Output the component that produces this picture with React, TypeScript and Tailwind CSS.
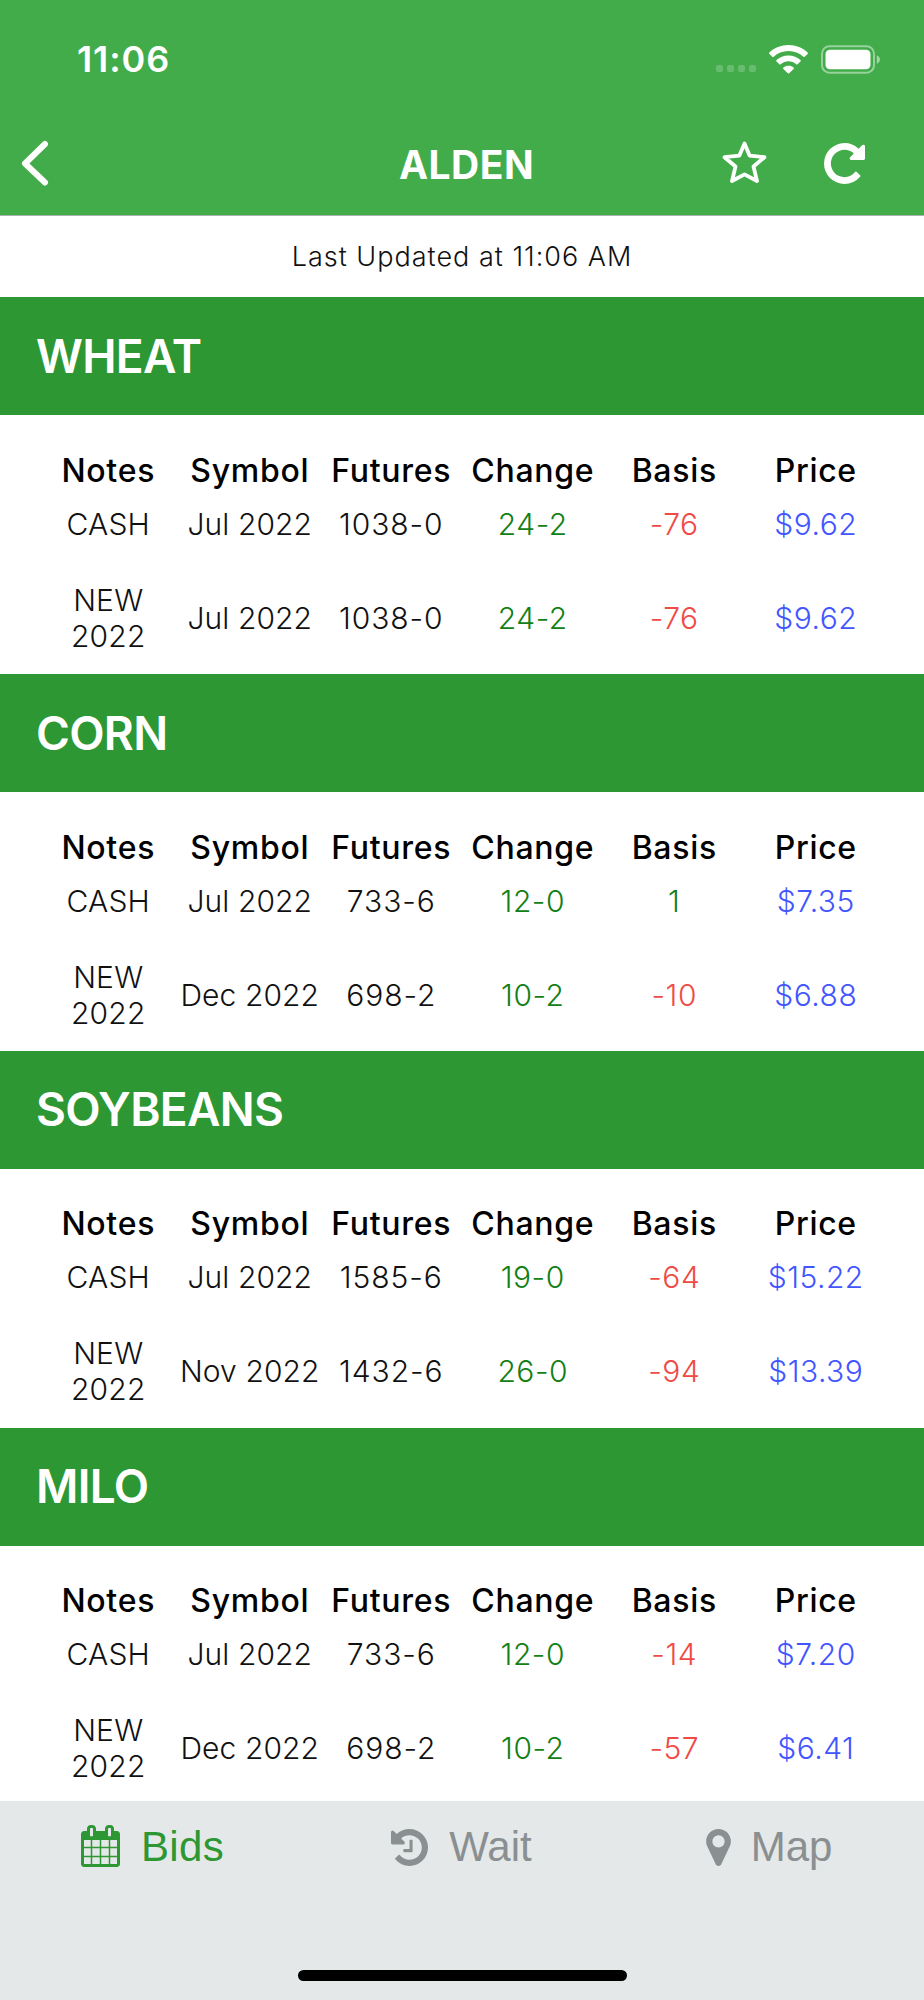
import React from 'react';

interface Bid {
  notes: string;
  symbol: string;
  futures: string;
  change: string;
  basis: string;
  price: string;
}

interface Commodity {
  name: string;
  bids: Bid[];
}

const commodities: Commodity[] = [
  {
    name: 'WHEAT',
    bids: [
      { notes: 'CASH', symbol: 'Jul 2022', futures: '1038-0', change: '24-2', basis: '-76', price: '$9.62' },
      { notes: 'NEW 2022', symbol: 'Jul 2022', futures: '1038-0', change: '24-2', basis: '-76', price: '$9.62' },
    ],
  },
  {
    name: 'CORN',
    bids: [
      { notes: 'CASH', symbol: 'Jul 2022', futures: '733-6', change: '12-0', basis: '1', price: '$7.35' },
      { notes: 'NEW 2022', symbol: 'Dec 2022', futures: '698-2', change: '10-2', basis: '-10', price: '$6.88' },
    ],
  },
  {
    name: 'SOYBEANS',
    bids: [
      { notes: 'CASH', symbol: 'Jul 2022', futures: '1585-6', change: '19-0', basis: '-64', price: '$15.22' },
      { notes: 'NEW 2022', symbol: 'Nov 2022', futures: '1432-6', change: '26-0', basis: '-94', price: '$13.39' },
    ],
  },
  {
    name: 'MILO',
    bids: [
      { notes: 'CASH', symbol: 'Jul 2022', futures: '733-6', change: '12-0', basis: '-14', price: '$7.20' },
      { notes: 'NEW 2022', symbol: 'Dec 2022', futures: '698-2', change: '10-2', basis: '-57', price: '$6.41' },
    ],
  },
];

const columns = ['Notes', 'Symbol', 'Futures', 'Change', 'Basis', 'Price'];

const signColor = (value: string) => (value.startsWith('-') ? 'text-[#ef4a45]' : 'text-[#128015]');

const StatusBar: React.FC = () => (
  <div className="flex h-[112px] items-start justify-between pt-[37px] pl-[77px] pr-[43px]">
    <span className="text-[36px] leading-[44px] font-semibold tracking-[0.900px]">11:06</span>
    <div className="flex h-[44px] items-center">
      <div className="mt-[19px] mr-[13px] flex gap-[4px]">
        {[0, 1, 2, 3].map(dot => (
          <span key={dot} className="size-[7px] rounded-[2px] bg-white/20" />
        ))}
      </div>
      <svg className="mr-[13px] h-[29px] w-[39px]" viewBox="0 0 39 29" fill="currentColor">
        <path d="M19.5 0C27 0 33.700 2.800 38.600 7.500Q39.300 8.200 38.600 8.900L35.700 11.800Q35 12.400 34.300 11.800C30.500 8.200 25.200 6 19.500 6S8.500 8.200 4.700 11.800Q4 12.400 3.300 11.800L.4 8.900Q-.3 8.200 .4 7.500C5.300 2.800 12 0 19.500 0Z" />
        <path d="M19.500 10.400C24.200 10.400 28.400 12.200 31.500 15Q32.200 15.700 31.500 16.400L28.600 19.200Q27.900 19.800 27.200 19.200C25.200 17.400 22.500 16.300 19.500 16.300S13.800 17.400 11.800 19.200Q11.100 19.800 10.400 19.200L7.500 16.400Q6.800 15.700 7.500 15C10.600 12.200 14.800 10.400 19.500 10.400Z" />
        <path d="M19.500 20.800C21.500 20.800 23.200 21.400 24.600 22.500Q25.300 23.200 24.600 23.900L20.200 28.200Q19.500 28.900 18.800 28.200L14.400 23.900Q13.700 23.200 14.400 22.500C15.800 21.400 17.500 20.800 19.500 20.800Z" />
      </svg>
      <svg className="h-[29px] w-[60px]" viewBox="0 0 60 29">
        <rect x="1" y="1.200" width="52" height="26.500" rx="7.500" fill="none" stroke="white" strokeOpacity="0.450" strokeWidth="2" />
        <rect x="4.500" y="4.700" width="45" height="19.500" rx="4.500" fill="white" />
        <path d="M55.800 10.200C57.700 11 59 12.600 59 14.500S57.700 18 55.800 18.800Z" fill="white" fillOpacity="0.500" />
      </svg>
    </div>
  </div>
);

const Header: React.FC = () => (
  <header className="h-[216px] shrink-0 border-b border-[#a9b5a9] bg-[#43ac4a] text-white">
    <StatusBar />
    <div className="grid h-[103px] grid-cols-[360px_1fr_360px] items-center">
      <svg className="mb-[1px] ml-[19px] h-[48px] w-[32px]" viewBox="0 0 32 48" fill="none" stroke="currentColor" strokeWidth="6" strokeLinecap="round" strokeLinejoin="round">
        <path d="M26 5L6 24.500L26 43.500" />
      </svg>
      <h1 className="mt-[3px] ml-[9px] text-center text-[39px] font-bold tracking-[0.500px]">ALDEN</h1>
      <div className="mb-[1px] flex items-center justify-end pr-[59px]">
        <svg className="mr-[57px] mb-[3px] h-[44px] w-[45px]" viewBox="0 0 45 44" fill="none" stroke="currentColor" strokeWidth="3.800" strokeLinejoin="round">
          <path d="M22.500 3.500L27.600 15.600L42.500 17.200L31.500 26.500L35 41L22.500 34.400L10 41L13.500 26.500L2.500 17.200L17.400 15.600Z" />
        </svg>
        <svg className="size-[41px]" viewBox="128 128 1536 1536" fill="currentColor">
          <path d="M1664 256v448q0 26-19 45t-45 19h-448q-42 0-59-40-17-39 14-69l138-138q-148-137-349-137-104 0-198.500 40.500t-163.500 109.500-109.500 163.500-40.500 198.500 40.500 198.500 109.500 163.500 163.500 109.500 198.500 40.500q119 0 225-52t179-147q7-10 23-12 14 0 25 9l137 138q9 8 9.500 20.500t-7.500 22.500q-109 132-264 204.500t-327 72.500q-156 0-298-61t-245-164-164-245-61-298 61-298 164-245 245-164 298-61q147 0 284.500 55.500t244.500 156.500l130-129q29-31 70-14 39 17 39 59z" />
        </svg>
      </div>
    </div>
  </header>
);

const BidTable: React.FC<{ commodity: Commodity }> = ({ commodity }) => (
  <section className="h-[376.800px]">
    <h2 className="flex h-[118px] items-center bg-[#2d9733] pl-[36px] text-[46px] font-semibold tracking-[-0.700px] text-white">
      {commodity.name}
    </h2>
    <div className="px-[37.500px] pt-[36.500px] text-center">
      <div className="grid grid-cols-6 text-[32px] leading-[38px] font-[550] tracking-[0.700px] text-black">
        {columns.map(column => (
          <span key={column}>{column}</span>
        ))}
      </div>
      {commodity.bids.map(bid => (
        <div key={bid.notes} className="grid grid-cols-6 items-center pt-[16px] pb-[24px] text-[30px] leading-[36px] font-[330] tracking-[0.500px] text-[#111]">
          <span className="px-6 tracking-[0.200px]">{bid.notes}</span>
          <span className="whitespace-nowrap tracking-[0.100px]">{bid.symbol}</span>
          <span className="tracking-[0.900px]">{bid.futures}</span>
          <span className="text-[#128015]">{bid.change}</span>
          <span className={signColor(bid.basis)}>{bid.basis}</span>
          <span className="text-[#4255ff]">{bid.price}</span>
        </div>
      ))}
    </div>
  </section>
);

const TabBar: React.FC = () => (
  <nav className="flex h-[199px] shrink-0 flex-col items-center justify-between bg-[#e4e8e8] pb-[19px] font-['Liberation_Sans',Arial,sans-serif] text-[42px] leading-[48px] text-[#8a8f91]">
    <div className="grid w-full grid-cols-3 pt-[22px]">
      <div className="flex items-center justify-center gap-[21px] pr-[3px] text-[#2d9733]">
        <svg className="mb-[2px] h-[42px] w-[39px]" viewBox="0 0 1664 1792" fill="currentColor">
          <path d="M128 1664h288v-288h-288v288zm352 0h320v-288h-320v288zm-352-352h288v-320h-288v320zm352 0h320v-320h-320v320zm-352-384h288v-288h-288v288zm736 736h320v-288h-320v288zm-384-736h320v-288h-320v288zm768 736h288v-288h-288v288zm-384-352h320v-320h-320v320zm-352-864v-288q0-13-9.500-22.500t-22.500-9.500h-64q-13 0-22.500 9.500t-9.500 22.500v288q0 13 9.500 22.500t22.500 9.500h64q13 0 22.500-9.500t9.500-22.500zm736 864h288v-320h-288v320zm-384-384h320v-288h-320v288zm384 0h288v-288h-288v288zm32-480v-288q0-13-9.500-22.500t-22.500-9.500h-64q-13 0-22.500 9.500t-9.500 22.500v288q0 13 9.500 22.500t22.500 9.500h64q13 0 22.500-9.500t9.500-22.500zm384-64v1280q0 52-38 90t-90 38h-1408q-52 0-90-38t-38-90v-1280q0-52 38-90t90-38h128v-96q0-66 47-113t113-47h64q66 0 113 47t47 113v96h384v-96q0-66 47-113t113-47h64q66 0 113 47t47 113v96h128q52 0 90 38t38 90z" />
        </svg>
        <span className="tracking-[0.300px]">Bids</span>
      </div>
      <div className="flex items-center justify-center gap-[21px] pr-[1px]">
        <svg className="size-[37px]" viewBox="0 128 1536 1536" fill="currentColor">
          <path d="M1536 896q0 156-61 298t-164 245-245 164-298 61q-172 0-327-72.500t-264-204.500q-7-10-6.500-22.500t8.500-20.500l137-138q10-9 25-9 16 2 23 12 73 95 179 147t225 52q104 0 198.500-40.500t163.500-109.500 109.500-163.500 40.500-198.500-40.500-198.500-109.500-163.500-163.500-109.500-198.500-40.500q-98 0-188 35.500t-160 101.500l137 138q31 30 14 69-17 40-59 40h-448q-26 0-45-19t-19-45v-448q0-42 40-59 39-17 69 14l130 129q107-101 244.500-156.500t284.500-55.500q156 0 298 61t245 164 164 245 61 298zM896 608v448q0 14-9 23t-23 9h-320q-14 0-23-9t-9-23v-64q0-14 9-23t23-9h224v-352q0-14 9-23t23-9h64q14 0 23 9t9 23z" />
        </svg>
        <span>Wait</span>
      </div>
      <div className="flex items-center justify-center gap-[20px] pr-[2px]">
        <svg className="h-[37px] w-[25px]" viewBox="0 128 1024 1536" fill="currentColor">
          <path d="M768 640q0-106-75-181t-181-75-181 75-75 181 75 181 181 75 181-75 75-181zm256 0q0 109-33 179l-364 774q-16 33-47.500 52t-67.500 19-67.500-19-46.500-52l-365-774q-33-70-33-179 0-212 150-362t362-150 362 150 150 362z" />
        </svg>
        <span>Map</span>
      </div>
    </div>
    <div className="h-[11px] w-[329px] rounded-full bg-black" />
  </nav>
);

const App: React.FC = () => {
  return (
    <div className="flex h-[2000px] w-[924px] flex-col overflow-hidden bg-white font-['Inter',sans-serif]">
      <Header />
      <p className="flex h-[81.300px] shrink-0 items-center justify-center pt-[1px] text-[27px] font-[350] tracking-[1px] text-[#111]">
        Last Updated at 11:06 AM
      </p>
      <main className="min-h-0 flex-1 overflow-hidden">
        {commodities.map(commodity => (
          <BidTable key={commodity.name} commodity={commodity} />
        ))}
      </main>
      <TabBar />
    </div>
  );
};

export default App;
